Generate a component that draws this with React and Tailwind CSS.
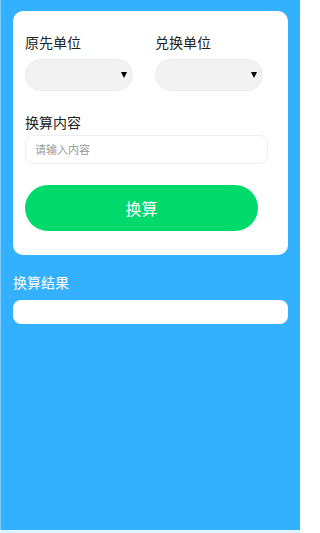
export default function App() {
  const font = { fontFamily: '"Noto Sans CJK SC", "Noto Sans", sans-serif' };
  const Arrow = () => (
    <span className="w-0 h-0 border-l-[3px] border-r-[3px] border-t-[6px] border-l-transparent border-r-transparent border-t-black" />
  );
  return (
    <div className="w-[300px] h-[533px] bg-[#dff3ff] flex flex-col" style={font}>
      <div className="h-[530px] bg-[#33b1ff] border-l border-[#7fccff] flex flex-col px-[12px] pt-[11px]">
        <div className="bg-white rounded-[10px] px-[12px] pt-[21px] pb-[24px] flex flex-col">
          <div className="flex gap-[22px]">
            <div className="flex flex-col w-[108px]">
              <span className="text-[14px] leading-[20px] text-[#222]">原先单位</span>
              <div className="mt-[7px] h-[32px] rounded-full bg-[#f2f2f2] border border-[#ebebeb] flex items-center justify-end pr-[5px]">
                <Arrow />
              </div>
            </div>
            <div className="flex flex-col w-[108px]">
              <span className="text-[14px] leading-[20px] text-[#222]">兑换单位</span>
              <div className="mt-[7px] h-[32px] rounded-full bg-[#f2f2f2] border border-[#ebebeb] flex items-center justify-end pr-[5px]">
                <Arrow />
              </div>
            </div>
          </div>
          <span className="mt-[21px] text-[14px] leading-[20px] text-[#222]">换算内容</span>
          <div className="mt-[3px] h-[29px] mr-[8px] rounded-[8px] border border-[#eeeeee] flex items-center pl-[9px]">
            <span className="text-[11px] text-[#999]">请输入内容</span>
          </div>
          <div className="mt-[21px] mr-[18px] h-[46px] rounded-full bg-[#00d96b] flex items-center justify-center">
            <span className="text-[16px] text-white">换算</span>
          </div>
        </div>
        <span className="mt-[17px] text-[14px] leading-[20px] text-white">换算结果</span>
        <div className="mt-[8px] h-[24px] bg-white rounded-[8px]" />
      </div>
    </div>
  );
}
